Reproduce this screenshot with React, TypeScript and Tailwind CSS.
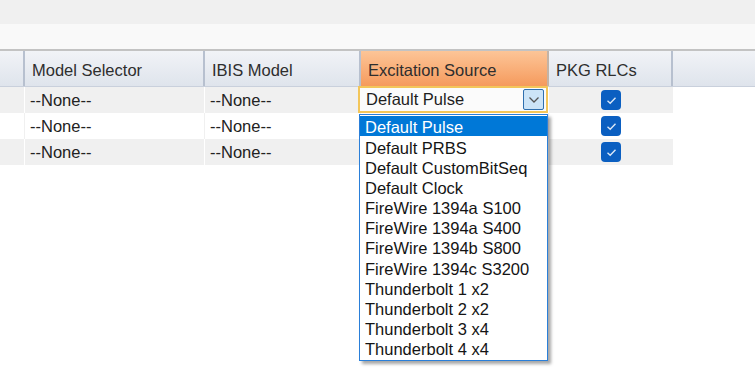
import React from "react";

const font = { fontFamily: '"Liberation Sans", Arial, sans-serif' };

const items = [
  "Default Pulse",
  "Default PRBS",
  "Default CustomBitSeq",
  "Default Clock",
  "FireWire 1394a S100",
  "FireWire 1394a S400",
  "FireWire 1394b S800",
  "FireWire 1394c S3200",
  "Thunderbolt 1 x2",
  "Thunderbolt 2 x2",
  "Thunderbolt 3 x4",
  "Thunderbolt 4 x4",
];

function Check() {
  return (
    <div className="w-[20px] h-[20px] rounded-[4px] bg-[#0b5fc1] flex items-center justify-center">
      <svg width="11" height="9" viewBox="0 0 11 9">
        <path d="M1.5 4.8 L4.2 7.2 L9.5 1.8" fill="none" stroke="#dbe8f7" strokeWidth="1.4" />
      </svg>
    </div>
  );
}

function Row({ bg, sep, first }: { bg: string; sep: string; first?: boolean }) {
  return (
    <div className={`flex h-[26px] w-[673px] ${bg}`}>
      <div className={`w-[25px] border-r ${sep}`} />
      <div className={`w-[180px] border-r ${sep} pl-[5px] flex items-center text-[16.5px] text-[#222]`}>--None--</div>
      <div className={`w-[156px] border-r ${sep} pl-[5px] flex items-center text-[16.5px] text-[#222]`}>--None--</div>
      <div className={`w-[188px] border-r ${sep} relative`}>
        {first && (
          <div className="absolute left-[-3px] top-[-1px] w-[190px] h-[27px] border-2 border-[#f3c65a] bg-[#fbfbfb] flex items-center pl-[6px] text-[16.5px] text-[#1e1e1e]">
            Default Pulse
            <div className="absolute right-[2px] top-[1px] w-[21px] h-[21px] rounded-[2px] border border-[#2f6fae] bg-[#cce4f7] flex items-center justify-center">
              <svg width="12" height="8" viewBox="0 0 12 8">
                <path d="M1.5 1.5 L6 6 L10.5 1.5" fill="none" stroke="#555" strokeWidth="1.3" />
              </svg>
            </div>
          </div>
        )}
      </div>
      <div className={`w-[124px] flex items-center justify-center`}>
        <Check />
      </div>
    </div>
  );
}

export default function App() {
  return (
    <div className="w-[755px] h-[391px] bg-white relative overflow-hidden" style={font}>
      <div className="h-[24px] bg-[#f0f0f0]" />
      <div className="h-[25px] bg-[#f9f9f9]" />
      <div className="h-[2px] bg-[#c3c3c3]" />
      {/* header */}
      <div className="flex h-[36px] bg-gradient-to-b from-[#f1f3f7] to-[#dfe4ec] border-b border-[#c9d0dc] text-[16.5px] text-[#2e2e2e]">
        <div className="w-[25px] border-r-2 border-[#b7c0cf]" />
        <div className="w-[180px] border-r-2 border-[#b7c0cf] pl-[7px] pt-[3px] flex items-center">Model Selector</div>
        <div className="w-[156px] border-r-2 border-[#b7c0cf] pl-[7px] pt-[3px] flex items-center">IBIS Model</div>
        <div className="w-[188px] border-r-2 border-[#c3b3a6] pl-[7px] pt-[3px] flex items-center bg-gradient-to-b from-[#fcc597] to-[#f59a5c]">Excitation Source</div>
        <div className="w-[124px] border-r-2 border-[#b7c0cf] pl-[7px] pt-[3px] flex items-center">PKG RLCs</div>
        <div className="flex-1" />
      </div>
      <Row bg="bg-[#f0f0f0]" sep="border-white" first />
      <Row bg="bg-white" sep="border-[#f0f0f0]" />
      <Row bg="bg-[#f0f0f0]" sep="border-white" />

      {/* dropdown */}
      <div className="absolute left-[359px] top-[114px] w-[189px] h-[247px] bg-white border border-[#2a7fd9] shadow-[3px_3px_3px_rgba(0,0,0,0.35)] flex flex-col pt-[1px]">
        {items.map((it, i) => (
          <div
            key={it}
            className={`h-[20.2px] flex items-center pl-[5px] pt-[3px] text-[16.5px] leading-none ${
              i === 0 ? "bg-[#0078d7] text-white" : "text-[#141414]"
            }`}
          >
            {it}
          </div>
        ))}
      </div>
    </div>
  );
}
